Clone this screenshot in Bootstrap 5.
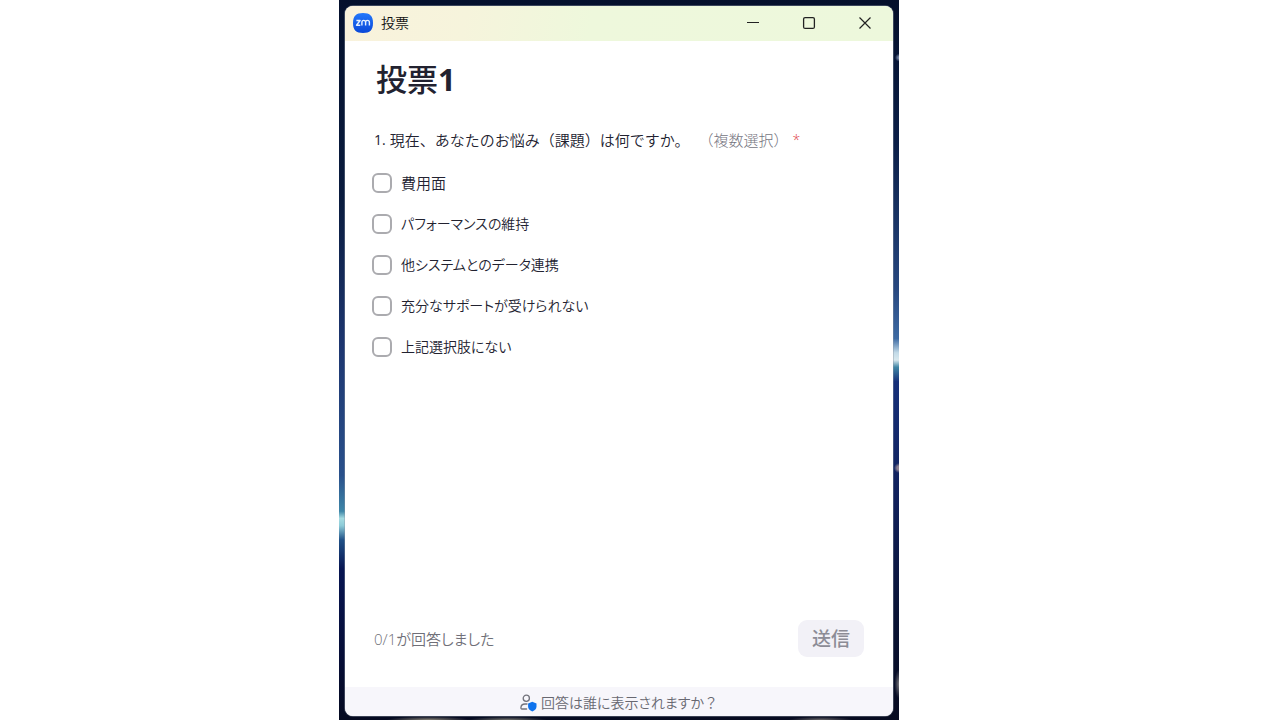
<!DOCTYPE html>
<html lang="ja">
<head>
<meta charset="utf-8">
<meta name="viewport" content="width=device-width, initial-scale=1">
<title>投票</title>
<link href="https://cdn.jsdelivr.net/npm/bootstrap@5.3.0/dist/css/bootstrap.min.css" rel="stylesheet">
<style>
body { font-family: "Open Sans", "Noto Sans CJK JP", sans-serif; color: #222230; background: #fff; }
.stage { display: grid; grid-template-columns: 339fr minmax(0, 560px) 381fr; }
.desktop {
  grid-column: 2;
  padding: 6px 6px 4px;
  background:
    radial-gradient(ellipse 60px 5px at 16% 100%, #8b8578 0, transparent 70%) no-repeat,
    radial-gradient(ellipse 50px 4px at 30% 100%, #77766f 0, transparent 80%) no-repeat,
    radial-gradient(ellipse 40px 4px at 86% 100%, #6d6a6b 0, transparent 80%) no-repeat,
    radial-gradient(circle at 100% 8%, #6f7fa0 0 1px, transparent 4px) no-repeat,
    radial-gradient(circle at 100% 65%, #8a7f92 0 2px, transparent 5px) no-repeat,
    radial-gradient(ellipse 5px 16px at 100% 95%, #77767c 0, transparent 90%) no-repeat,
    linear-gradient(#040f2a 0, #0b1f48 20%, #27477f 40%, #3d6aa3 47%, #c3dbe8 49%, #d8e8ee 50%, #3f86a5 51%, #16307a 53%, #10205a 70%, #0a1436 85%, #070b20 100%) right / 50% 100% no-repeat,
    linear-gradient(#04102c 0, #0a1c3f 28%, #1d3670 48%, #29508b 66%, #3d86a8 71%, #a4dbe1 72%, #8ccbd8 73%, #1f5087 75%, #071552 79%, #060d35 92%, #050a20 100%) left / 50% 100% no-repeat;
}
.poll-window { border-radius: 8px; box-shadow: 0 0 0 1px #8d95a366; }
.title-bar { height: 35px; padding: 0 0 2px 8px; background: linear-gradient(100deg, #f9f2dc 0, #f6f4dc 22%, #eef8dc 45%, #edf8dc 100%); color: #111; }
.caption-text { font-size: 14px; line-height: 20px; font-weight: 350; }
.caption-btn { width: 56px; height: 33px; border: 0; background: none; padding: 0; color: #222; }
.caption-btn svg { display: block; margin: 0 auto; }
.poll-body { padding: 16px 29px 30px 27px; }
.poll-title { font-size: 31px; line-height: 44px; font-weight: 500; padding-left: 4px; margin-bottom: 28px; }
.question { font-size: 15px; line-height: 22px; margin-bottom: 22px; padding-left: 2px; color: #222230; font-weight: 350; }
.q-number { font-size: 14px; font-weight: 400; }
.q-kind { color: #74747e; margin-left: 9px; font-weight: 300; }
.q-star { color: #e0454a; font-size: 14px; margin-left: 4px; }
.choice { gap: 9px; min-height: 20px; }
.choices { gap: 21px; }
.choice .form-check-input { width: 20px; height: 20px; border: 2px solid #ababaf; border-radius: 6px; }
.choice .form-check-label { font-size: 14px; line-height: 20px; font-weight: 350; font-feature-settings: "palt"; }
.choice .form-check-label.all-kanji { font-size: 15px; }
.progress-note { font-size: 15px; line-height: 24px; color: #6f6f78; font-feature-settings: "palt"; padding-left: 2px; font-weight: 350; }
.send-btn { height: 37px; width: 66px; padding: 0; border: 0; border-radius: 9px; font-size: 19px; font-weight: 500; line-height: 36px; }
.send-btn:disabled { background: #f2f1f7; color: #8c8c96; opacity: 1; }
.privacy-bar { height: 29px; background: #f7f6fb; font-size: 14px; line-height: 24px; gap: 4px; padding-top: 2px; font-weight: 350; }
.privacy-bar a { color: #686871; }
.tight-kana { font-feature-settings: "palt"; }
</style>
</head>
<body>
<div class="stage min-vh-100">
  <div class="desktop d-flex">
    <main class="poll-window bg-white flex-grow-1 d-flex flex-column overflow-hidden">
      <header class="title-bar d-flex align-items-center">
        <svg width="20" height="20" viewBox="0 0 20 20" aria-hidden="true" class="flex-shrink-0">
          <defs><linearGradient id="zm" x1="0" y1="0" x2="0" y2="1"><stop offset="0" stop-color="#2378fb"/><stop offset="1" stop-color="#0a47d8"/></linearGradient></defs>
          <path d="M10 0C17 0 20 3 20 10S17 20 10 20S0 17 0 10S3 0 10 0Z" fill="url(#zm)"/>
          <path d="M3.400 7.500H7.100L3.500 12.200H7.300M8.900 12.600V9.200Q8.900 7.400 10.700 7.400T12.600 9.200V12.600M12.600 9.200Q12.600 7.400 14.500 7.400T16.400 9.200V12.600" fill="none" stroke="#e6f0ff" stroke-width="1.400" stroke-linejoin="round"/>
        </svg>
        <span class="caption-text me-auto ps-2">投票</span>
        <button type="button" class="caption-btn" aria-label="最小化"><svg width="14" height="14" viewBox="0 0 14 14"><path d="M1 6.5H13" stroke="currentColor" stroke-width="1.2"/></svg></button>
        <button type="button" class="caption-btn" aria-label="最大化"><svg width="14" height="14" viewBox="0 0 14 14"><rect x="1.6" y="1.6" width="10.8" height="10.8" rx="1.5" fill="none" stroke="currentColor" stroke-width="1.3"/></svg></button>
        <button type="button" class="caption-btn" aria-label="閉じる"><svg width="14" height="14" viewBox="0 0 14 14"><path d="M1.5 1.5L12.5 12.5M12.5 1.5L1.5 12.5" stroke="currentColor" stroke-width="1.2"/></svg></button>
      </header>
      <form class="poll-body flex-grow-1 d-flex flex-column">
        <h1 class="poll-title">投票<span class="fw-bold">1</span></h1>
        <p class="question d-flex flex-wrap" id="q1"><span class="q-number me-1">1.</span><span>現在、あなたのお悩み（課題）は何ですか。</span><span class="q-kind">（複数選択）</span><span class="q-star">*</span></p>
        <div class="choices d-flex flex-column" role="group" aria-labelledby="q1">
          <div class="choice d-flex align-items-center"><input class="form-check-input m-0" type="checkbox" id="c1"><label class="form-check-label all-kanji" for="c1">費用面</label></div>
          <div class="choice d-flex align-items-center"><input class="form-check-input m-0" type="checkbox" id="c2"><label class="form-check-label" for="c2">パフォーマンスの維持</label></div>
          <div class="choice d-flex align-items-center"><input class="form-check-input m-0" type="checkbox" id="c3"><label class="form-check-label" for="c3">他システムとのデータ連携</label></div>
          <div class="choice d-flex align-items-center"><input class="form-check-input m-0" type="checkbox" id="c4"><label class="form-check-label" for="c4">充分なサポートが受けられない</label></div>
          <div class="choice d-flex align-items-center"><input class="form-check-input m-0" type="checkbox" id="c5"><label class="form-check-label" for="c5">上記選択肢にない</label></div>
        </div>
        <div class="mt-auto d-flex align-items-center justify-content-between">
          <span class="progress-note">0/1が回答しました</span>
          <button type="submit" class="btn send-btn" disabled>送信</button>
        </div>
      </form>
      <footer class="privacy-bar d-flex align-items-center justify-content-center">
        <svg width="17" height="18" viewBox="0 0 17 18" aria-hidden="true"><g fill="none" stroke="#73737c" stroke-width="1.3" stroke-linecap="round"><circle cx="6.3" cy="4.3" r="3.1"/><path d="M6.6 15H1.9Q.8 15 .9 13.6Q1.2 10 5 10H7"/></g><path d="M12.3 7.8L16.5 9.6V12.8Q16.3 15.8 12.3 17.4Q8.3 15.8 8.1 12.8V9.6Z" fill="#0e72ed"/></svg>
        <a href="#" class="text-decoration-none"><span class="tight-kana">回答は誰に表示されますか</span>？</a>
      </footer>
    </main>
  </div>
</div>
<script src="https://cdn.jsdelivr.net/npm/bootstrap@5.3.0/dist/js/bootstrap.bundle.min.js"></script>
</body>
</html>
